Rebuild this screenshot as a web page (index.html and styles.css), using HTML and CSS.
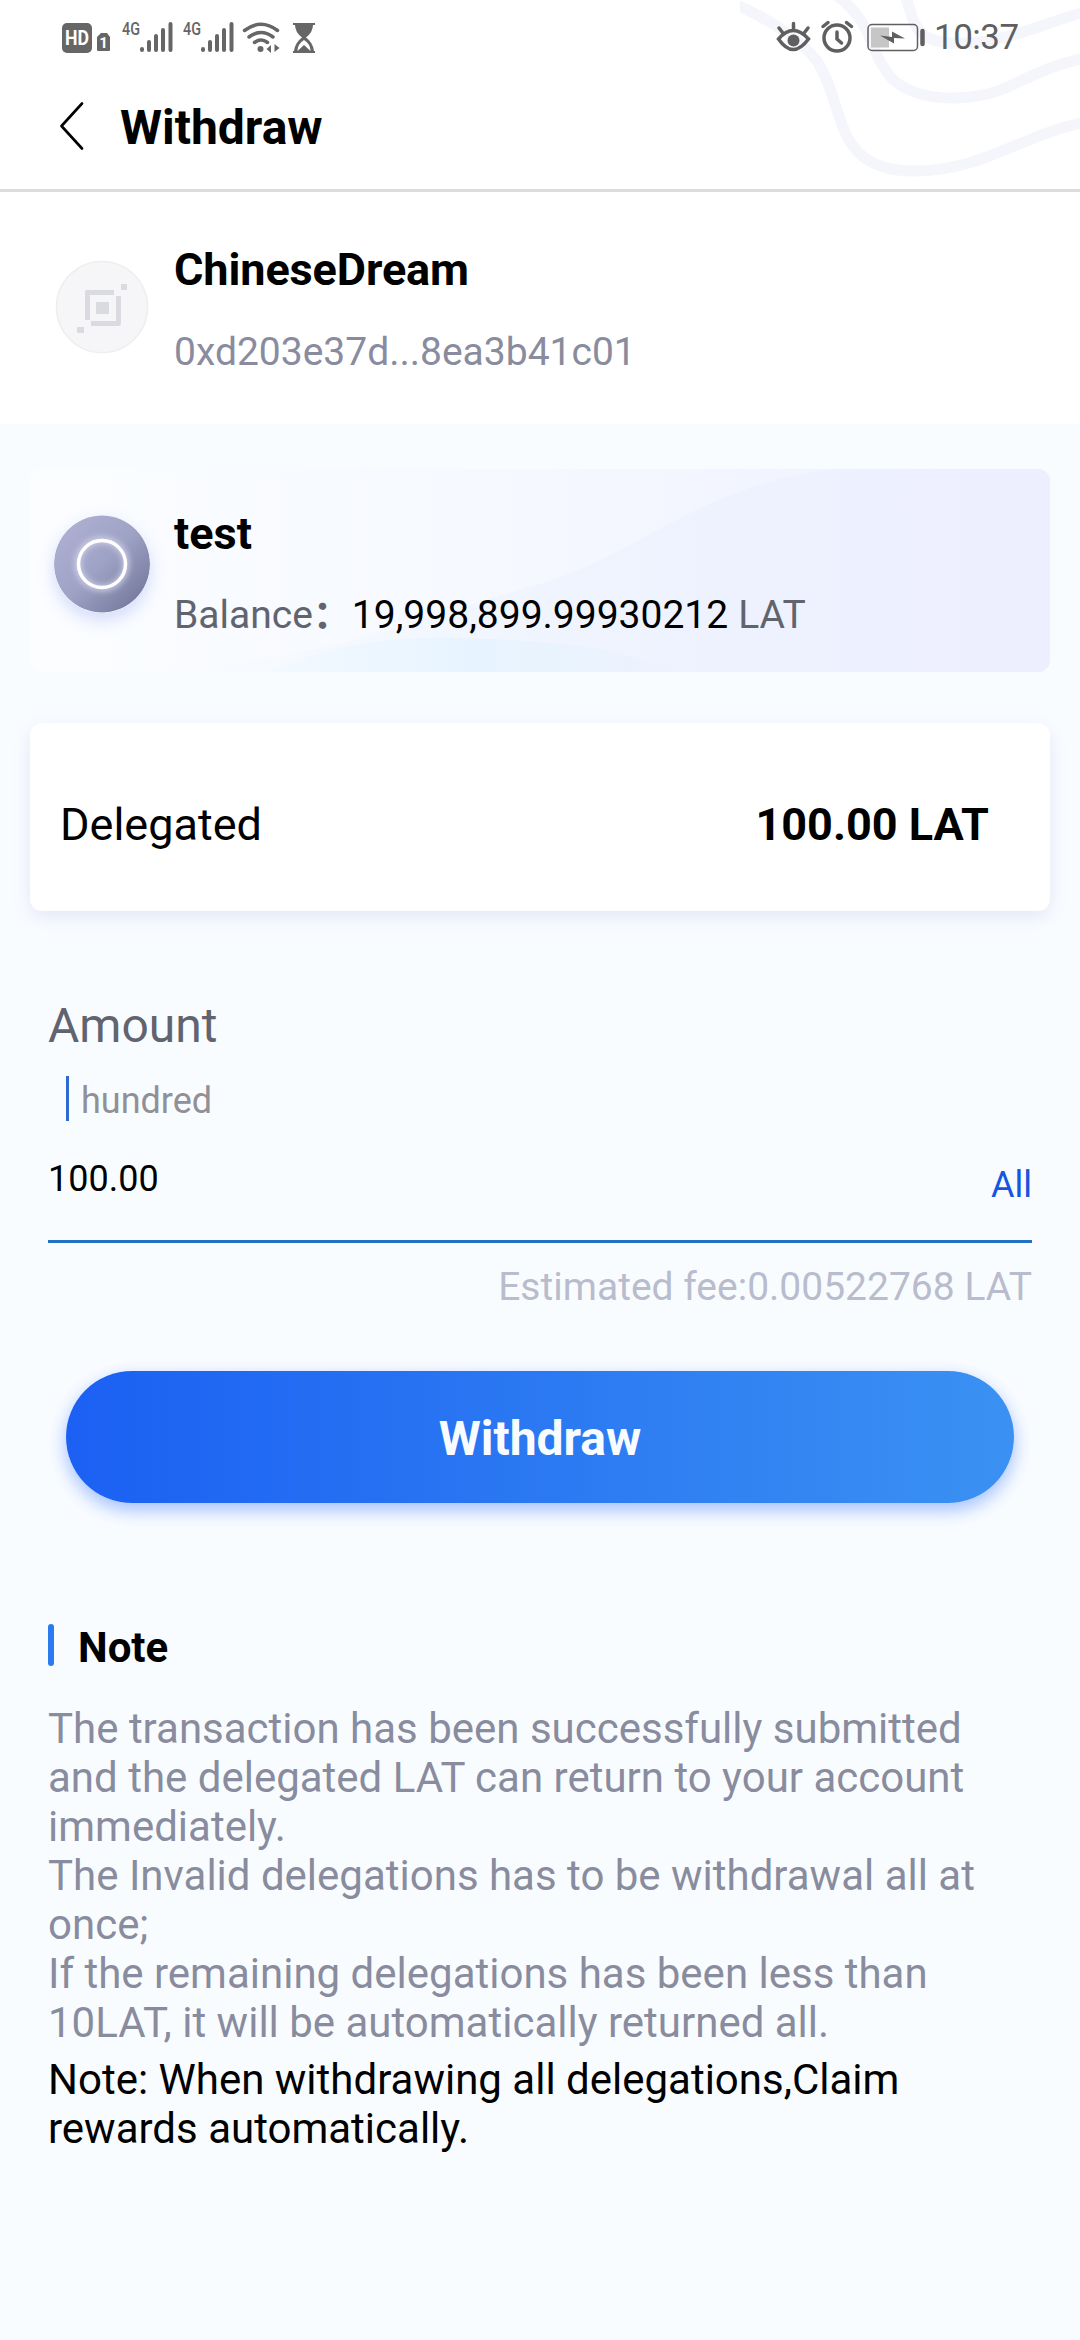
FILE: index.html
```html
<!DOCTYPE html>
<html lang="en">
<head>
<meta charset="utf-8">
<title>Withdraw</title>
<link rel="stylesheet" href="styles.css">
</head>
<body>
<header class="top">
  <svg class="waves" viewBox="740 0 340 189" aria-hidden="true">
    <g fill="none" stroke="#f5f5fc" stroke-width="11">
      <path d="M730 2C765 17 800 38 817 61C847 108 831 171 915 171C982 171 1022 135 1085 122"/>
      <path d="M836 -5C872 20 872 55 885 69C904 105 976 104 1012 85C1036 74 1050 66 1085 58"/>
      <path d="M905 -4C915 18 910 40 950 43C1000 46 1040 24 1085 12"/>
    </g>
  </svg>
  <div class="status">
    <svg class="status-left" width="220" height="44" viewBox="60 14 220 44" fill="#666">
      <rect x="62" y="23" width="30" height="30" rx="5"/>
      <text x="77" y="45" class="hd" text-anchor="middle" textLength="24" lengthAdjust="spacingAndGlyphs">HD</text>
      <path d="M101 33h6l3 4v13q0 1-1 1H98q-1 0-1-1V37z"/>
      <text x="103.500" y="48" class="sim" text-anchor="middle">1</text>
      <text x="122" y="35" class="net" textLength="18" lengthAdjust="spacingAndGlyphs">4G</text>
      <text x="183" y="35" class="net" textLength="18" lengthAdjust="spacingAndGlyphs">4G</text>
      <g stroke="#666" stroke-width="4" stroke-linecap="round">
        <path d="M142 49v1M149 42v8M156 36v14M163 30v20M170.500 24v26"/>
        <path d="M203 49v1M210 42v8M217 36v14M224 30v20M231.500 24v26"/>
      </g>
      <g fill="none" stroke="#666" stroke-width="3.500" stroke-linecap="round">
        <path d="M244.500 30.500Q261 18 277.500 30.500M249 37Q261 28 273 37M254.500 42.500Q261 37.500 267.500 42.500"/>
      </g>
      <circle cx="260.500" cy="49" r="3"/>
      <path d="M271 45v8l-4.500-4zM274.500 44v8l5-4z"/>
    </svg>
    <svg class="hourglass" width="24" height="32" viewBox="292 22 24 32" fill="#666">
      <path d="M293 23h22v2h-2q0 7-7 12.500q7 5 8 13.500h1v2h-22v-2h1q1-8.500 8-13.500q-7-5.500-7-12.500h-2z"/>
      <path d="M297.500 51q0-7 6.500-11q6.500 4 6.500 11l-6.500-6z" fill="#fff"/>
    </svg>
    <svg class="status-right" width="150" height="40" viewBox="776 18 150 40" fill="none" stroke="#5f5f5f">
      <path d="M778.500 39Q793 22 808.500 39Q793 60 778.500 39z" stroke-width="3.500"/>
      <circle cx="793.500" cy="40.500" r="6" fill="#5f5f5f" stroke="none"/>
      <path d="M793.500 23.500v6M779 28l3.500 4.500M808 28l-3.500 4.500" stroke-width="3.500" stroke-linecap="round"/>
      <circle cx="837" cy="38" r="13" stroke-width="3.500"/>
      <path d="M837 32v7l4.500 4M823 26.500l5-4M846.500 22.500l5 4" stroke-width="3.500" stroke-linecap="round"/>
      <rect x="868" y="24.500" width="49.500" height="26" rx="4" stroke-width="1.500"/>
      <rect x="871" y="27.500" width="18" height="20" fill="#c6c6c6" stroke="none"/>
      <path d="M880 35.500l12 1.500v-5.500l13 7l-11-.5v5.500z" fill="#5f5f5f" stroke="none"/>
      <path d="M922.500 31v13" stroke-width="4.500" stroke-linecap="round"/>
    </svg>
    <span class="clock">10:37</span>
  </div>
  <div class="titlebar">
    <svg class="back" width="24" height="48" viewBox="0 0 24 48" fill="none" stroke="#000" stroke-width="2.600" stroke-linecap="round" stroke-linejoin="round"><path d="M22 1.500L1.500 24L22 46.500"/></svg>
    <h1 class="title">Withdraw</h1>
  </div>
</header>

<section class="node">
  <svg class="node-icon" width="94" height="94" viewBox="0 0 94 94">
    <circle cx="47" cy="47" r="45.500" fill="#f6f6f9" stroke="#eeeeef" stroke-width="1.500"/>
    <g fill="#dadae1">
      <path d="M31 30h28v5H35v25h-5V32q0-2 1-2zM61 36h5v27q0 3-3 3H36v-5h25zM41 42h13v12H41zM66 24h6v6h-6zM22 67h7v6h-7z"/>
    </g>
  </svg>
  <div class="stack">
    <div class="name">ChineseDream</div>
    <div class="address">0xd203e37d...8ea3b41c01</div>
  </div>
</section>

<main class="content">
  <section class="wallet">
    <svg class="wallet-bg" viewBox="0 0 1020 203" preserveAspectRatio="none" aria-hidden="true">
      <defs>
        <linearGradient id="base"><stop offset="0" stop-color="#fbfdff"/><stop offset=".5" stop-color="#f5f8ff"/><stop offset="1" stop-color="#eef0ff"/></linearGradient>
        <linearGradient id="hill"><stop offset="0" stop-color="#f9fcff"/><stop offset=".45" stop-color="#eff4fe"/><stop offset="1" stop-color="#edeefe"/></linearGradient>
        <linearGradient id="pool"><stop offset="0" stop-color="#f3f9ff"/><stop offset=".5" stop-color="#e7f4ff"/><stop offset="1" stop-color="#edf2fe"/></linearGradient>
      </defs>
      <rect width="1020" height="203" fill="url(#base)"/>
      <path d="M130 203C330 185 410 140 510 115C620 80 670 15 808 0H1020V203z" fill="url(#hill)"/>
      <path d="M235 203C330 165 390 168 460 170C540 174 590 180 650 203z" fill="url(#pool)"/>
    </svg>
    <svg class="avatar" width="96" height="98" viewBox="0 0 96 98">
      <defs>
        <linearGradient id="orb" x1=".1" y1=".1" x2=".9" y2=".9"><stop offset="0" stop-color="#aeb0d2"/><stop offset=".5" stop-color="#9ea2c4"/><stop offset="1" stop-color="#757a9c"/></linearGradient>
        <filter id="glow" x="-30%" y="-30%" width="160%" height="160%"><feGaussianBlur stdDeviation="3"/></filter>
      </defs>
      <ellipse cx="48" cy="49" rx="48" ry="48.500" fill="url(#orb)"/>
      <circle cx="48" cy="49" r="24" fill="none" stroke="#dcdcf0" stroke-width="5" filter="url(#glow)"/>
      <circle cx="48" cy="49" r="23.500" fill="none" stroke="#fff" stroke-width="3.500"/>
    </svg>
    <div class="stack">
      <div class="name">test</div>
      <div class="balance"><span>Balance<span class="colon">：</span></span><b>19,998,899.99930212</b><span class="unit">LAT</span></div>
    </div>
  </section>

  <section class="delegated">
    <span>Delegated</span>
    <strong>100.00 LAT</strong>
  </section>

  <section class="form">
    <div class="label">Amount</div>
    <div class="magnitude">hundred</div>
    <div class="field"><span class="value">100.00</span><span class="all">All</span></div>
    <div class="fee">Estimated fee:0.00522768 LAT</div>
  </section>

  <button class="submit" type="button">Withdraw</button>

  <section class="notes">
    <h2 class="notes-title">Note</h2>
    <p class="notes-text">The transaction has been successfully submitted<br>and the delegated LAT can return to your account<br>immediately.<br>The Invalid delegations has to be withdrawal all at<br>once;<br>If the remaining delegations has been less than<br>10LAT, it will be automatically returned all.</p>
    <p class="notes-strong">Note: When withdrawing all delegations,Claim<br>rewards automatically.</p>
  </section>
</main>
</body>
</html>
```
FILE: styles.css
```css
* { box-sizing: border-box; }
body {
  margin: 0;
  width: 1080px;
  height: 2340px;
  overflow: hidden;
  background: #f9fcff;
  color: #000;
  font-family: Roboto, "Noto Sans CJK SC", sans-serif;
  white-space: nowrap;
}
svg { display: block; flex: none; }

.top {
  position: relative;
  height: 192px;
  background: #fff;
  border-bottom: 3px solid #dcdcde;
}
.waves { position: absolute; top: 0; right: 0; width: 340px; height: 189px; }
.status {
  position: relative;
  display: flex;
  align-items: flex-start;
  height: 76px;
  padding-left: 60px;
}
.status-left { margin-top: 14px; }
.hourglass { margin: 22px 0 0 12px; }
.status-right { margin: 18px 0 0 460px; }
.hd { font-size: 20px; font-weight: 700; fill: #fff; }
.sim { font-size: 15px; font-weight: 700; fill: #fff; }
.net { font-size: 19px; font-weight: 500; }
.clock { margin: 17px 0 0 8px; font-size: 35px; line-height: 42px; color: #5f5f5f; letter-spacing: -.5px; }
.titlebar { position: relative; display: flex; align-items: center; height: 102px; padding-left: 60px; }
.back { margin-bottom: 2px; }
.title { margin: 2px 0 0 36px; font-size: 48px; line-height: 56px; font-weight: 700; }

.node { display: flex; height: 232px; padding: 68px 0 0 55px; background: #fff; }
.node .stack { margin: -17px 0 0 25px; }
.name { font-size: 45px; line-height: 54px; font-weight: 700; }
.node .name { letter-spacing: -.1px; }
.address { margin-top: 32px; font-size: 39px; line-height: 46px; color: #898c9e; }

.content { padding: 45px 30px 0; }
.wallet {
  position: relative;
  display: flex;
  height: 203px;
  padding: 46px 0 0 24px;
  border-radius: 12px;
  overflow: hidden;
}
.wallet-bg { position: absolute; inset: 0; width: 100%; height: 100%; }
.avatar { position: relative; border-radius: 50%; box-shadow: 0 7px 16px rgba(100, 125, 230, .25); }
.wallet .stack { position: relative; margin: -8px 0 0 24px; }
.balance { display: flex; margin-top: 31px; font-size: 39px; line-height: 46px; color: #61646e; }
.balance b { color: #000; font-weight: 400; }
.colon { font-weight: 700; }
.unit { margin-left: 10px; }

.delegated {
  display: flex;
  align-items: center;
  justify-content: space-between;
  height: 188px;
  margin-top: 51px;
  padding: 15px 61px 0 30px;
  border-radius: 12px;
  background: #fff;
  box-shadow: 0 6px 18px rgba(70, 85, 170, .12);
  font-size: 45px;
}

.form { padding: 87px 18px 0; }
.label { font-size: 48px; line-height: 56px; color: #61646e; }
.magnitude {
  display: flex;
  align-items: center;
  height: 45px;
  margin: 22px 0 0 18px;
  padding: 4px 0 0 12px;
  border-left: 3px solid #2d6bd3;
  font-size: 36px;
  color: #909096;
}
.field {
  display: flex;
  justify-content: space-between;
  align-items: flex-start;
  height: 122px;
  padding-top: 37px;
  border-bottom: 3px solid #2470c5;
  font-size: 36px;
  line-height: 42px;
}
.all { margin-top: 6px; color: #1555e0; }
.fee { margin-top: 21px; font-size: 39px; line-height: 46px; text-align: right; color: #b9bccd; }

.submit {
  display: flex;
  align-items: center;
  justify-content: center;
  width: 948px;
  height: 132px;
  margin: 61px 0 0 36px;
  padding: 3px 0 0;
  border: 0;
  border-radius: 66px;
  background: linear-gradient(90deg, #1b60f3, #3b91f2);
  box-shadow: 0 7px 18px rgba(30, 100, 255, .4);
  color: #f9fcff;
  font: 700 48px Roboto, sans-serif;
}

.notes { padding: 120px 18px 0; }
.notes-title {
  display: flex;
  align-items: center;
  margin: 0;
  font-size: 42px;
  line-height: 50px;
  font-weight: 700;
}
.notes-title::before { content: ""; width: 6px; height: 42px; margin: -6px 24px 0 0; border-radius: 3px; background: #2b7af0; }
.notes-text, .notes-strong { margin: 0; font-size: 42px; line-height: 49px; }
.notes-text { margin-top: 31px; color: #898c9e; }
.notes-strong { margin-top: 8px; }
```
